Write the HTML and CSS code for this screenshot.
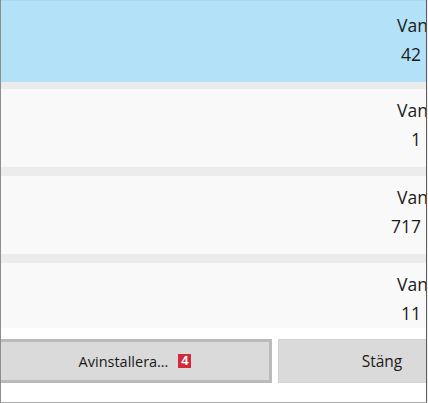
FILE: index.html
```html
<!DOCTYPE html>
<html lang="sv">
<head>
<meta charset="utf-8">
<title>Avinstallera</title>
<link rel="stylesheet" href="styles.css">
</head>
<body>
<div class="window">
  <div class="list">
    <div class="row selected">
      <div class="cell"><div class="name">Vanlig</div><div class="num"><span>42</span></div></div>
    </div>
    <div class="row">
      <div class="cell"><div class="name">Vanlig</div><div class="num"><span>1</span></div></div>
    </div>
    <div class="row">
      <div class="cell"><div class="name">Vanlig</div><div class="num"><span>717</span></div></div>
    </div>
    <div class="row">
      <div class="cell"><div class="name">Vanlig</div><div class="num"><span>11</span></div></div>
    </div>
  </div>
  <div class="buttons">
    <button class="btn primary">Avinstallera…<span class="badge">4</span></button>
    <button class="btn secondary">Stäng</button>
  </div>
</div>
</body>
</html>
```
FILE: styles.css
```css
html, body {
  margin: 0;
  padding: 0;
  width: 428px;
  height: 403px;
  overflow: hidden;
  background: #f0f0f0;
}

.window {
  box-sizing: border-box;
  width: 427px;
  height: 403px;
  background: #ffffff;
  border-left: 1px solid #8e8e8e;
  border-right: 1px solid #5c5c5c;
  border-bottom: 1px solid #a8a8a8;
  font-family: "Open Sans", "Noto Sans", sans-serif;
  color: #1b1b1b;
  overflow: hidden;
  display: flex;
  flex-direction: column;
}

.list {
  height: 328px;
  overflow: hidden;
  background: #ececec;
  display: flex;
  flex-direction: column;
  flex-shrink: 0;
}

.row {
  flex-shrink: 0;
  height: 78px;
  box-sizing: border-box;
  padding: 7px 5px 0 0;
  margin-top: 9px;
  background: #f9f9f9;
  display: flex;
  justify-content: flex-end;
}

.row.selected {
  height: 82px;
  margin-top: 0;
  padding-top: 10px;
  background: #b3e1f7;
  border-top: 1px solid #a5d8f3;
}

.row.selected + .row {
  margin-top: 7px;
}

.cell {
  width: 24px;
  font-size: 17.5px;
  line-height: 29px;
}

.name {
  white-space: nowrap;
}

.num {
  display: flex;
  justify-content: flex-end;
  white-space: nowrap;
}

.buttons {
  display: flex;
  gap: 6px;
  margin-top: 11px;
  height: 44px;
}

.btn {
  box-sizing: border-box;
  height: 44px;
  margin: 0;
  padding: 0;
  font-family: "Open Sans", "Noto Sans", sans-serif;
  font-size: 14.5px;
  color: #1b1b1b;
  background: #dadada;
  display: flex;
  align-items: center;
  justify-content: center;
  flex-shrink: 0;
}

.btn.primary {
  width: 271px;
  border: 3px solid #bababa;
  border-left: none;
}

.btn.secondary {
  width: 208px;
  border: 1px solid #d2d2d2;
  font-size: 15.5px;
}

.badge {
  display: inline-flex;
  align-items: center;
  justify-content: center;
  width: 13px;
  height: 14px;
  margin-left: 10px;
  background: #d22a3c;
  color: #ffffff;
  font-family: "Liberation Sans", Arial, sans-serif;
  font-weight: bold;
  font-size: 13px;
  line-height: 14px;
}
```
